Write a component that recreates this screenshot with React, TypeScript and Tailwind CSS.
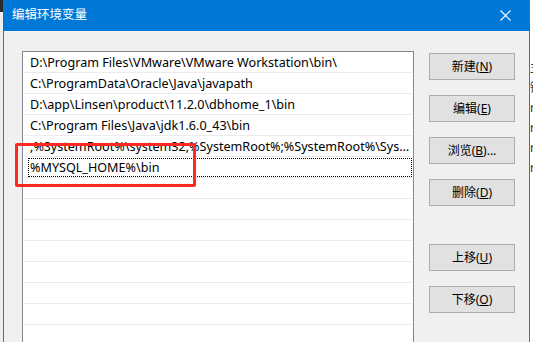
import { ReactNode } from 'react';

const paths = [
  'D:\\Program Files\\VMware\\VMware Workstation\\bin\\',
  'C:\\ProgramData\\Oracle\\Java\\javapath',
  'D:\\app\\Linsen\\product\\11.2.0\\dbhome_1\\bin',
  'C:\\Program Files\\Java\\jdk1.6.0_43\\bin',
  ';%SystemRoot%\\system32;%SystemRoot%;%SystemRoot%\\System32\\Wbem',
];

const buttons: { label: string; key: string; tail?: string; gapBefore?: boolean }[] = [
  { label: '新建', key: 'N' },
  { label: '编辑', key: 'E' },
  { label: '浏览', key: 'B', tail: '...' },
  { label: '删除', key: 'D' },
  { label: '上移', key: 'U', gapBefore: true },
  { label: '下移', key: 'O' },
];

const behind = ['主', '键', 'r', 'r', 'r', 'r'];

function Row({ children, editing }: { children?: ReactNode; editing?: boolean }) {
  return (
    <div className="h-[21px] shrink-0 flex flex-col">
      <div className="h-[20px] flex items-center pl-[5px] pr-px">
        {editing ? (
          <div className="flex-1 h-[19px] border border-dotted border-black flex items-center pl-[1px] pt-[2px] mt-px">
            {children}
          </div>
        ) : (
          <div className="flex-1 pl-[2px] pt-[3px] truncate">{children}</div>
        )}
      </div>
      <div className="h-px mx-px bg-[#ececec]" />
    </div>
  );
}

export default function App() {
  return (
    <div
      className="relative w-[533px] h-[342px] overflow-hidden flex bg-white text-[12px] text-black"
      style={{ fontFamily: '"Noto Sans", "Noto Sans CJK SC", sans-serif' }}
    >
      {/* window behind, left */}
      <div className="w-[3px] flex flex-col bg-[#eeeeee]">
        <div className="h-[12px] bg-[#2b2b2b]" />
      </div>

      <div className="w-[527px] flex flex-col border-x border-[#1a7fd4] bg-[#f0f0f0]">
        <div className="h-[31px] shrink-0 -mx-px bg-[#0078d7] flex items-center pl-[9px] pr-[19px] text-white">
          <span className="flex-1 text-[12.5px]">编辑环境变量</span>
          <svg width="11" height="11" viewBox="0 0 11 11" className="-mt-[1px]">
            <path d="M0.5 0.5 L10.5 10.5 M10.5 0.5 L0.5 10.5" stroke="#fff" strokeWidth="1.1" />
          </svg>
        </div>

        <div className="flex-1 flex pt-[20px] pl-[18px] pr-[14px]">
          <div className="w-[392px] h-[320px] shrink-0 border border-[#828790] bg-white flex flex-col overflow-hidden text-[12.6px]">
            {paths.map((p) => (
              <Row key={p}>{p}</Row>
            ))}
            <Row editing>%MYSQL_HOME%\bin</Row>
            {Array.from({ length: 9 }).map((_, i) => (
              <Row key={i} />
            ))}
          </div>

          <div className="ml-[15px] mt-[2px] flex flex-col gap-[15px]">
            {buttons.map((b) => (
              <button
                key={b.key}
                className={`w-[86px] h-[27px] border border-[#adadad] bg-[#e1e1e1] flex items-center justify-center ${
                  b.gapBefore ? 'mt-[23px]' : ''
                }`}
              >
                {b.label}(<u>{b.key}</u>){b.tail}
              </button>
            ))}
          </div>
        </div>
      </div>

      {/* window behind, right */}
      <div className="w-[3px] overflow-hidden bg-white pt-[60px] flex flex-col gap-[4px] text-[#3a2a20]">
        {behind.map((c, i) => (
          <div key={i} className="h-[16px] leading-[16px] whitespace-nowrap">
            {c}
          </div>
        ))}
      </div>

      {/* red annotation box */}
      <div className="absolute left-[15px] top-[143px] w-[181px] h-[44px] border-[3px] border-[#ff2a1f] rounded-[2px]" />
    </div>
  );
}
